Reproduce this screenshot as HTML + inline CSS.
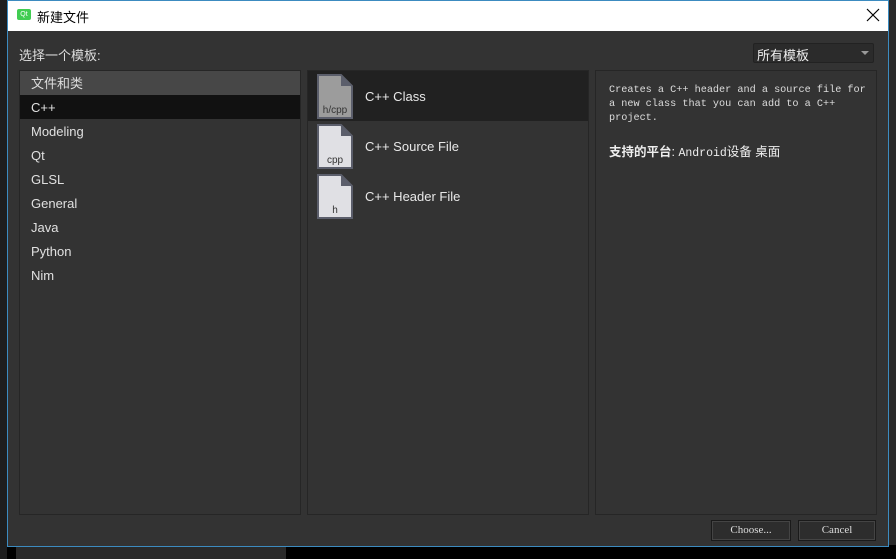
<!DOCTYPE html><html><head><style>
body{margin:0;width:896px;height:559px;background:#2a2a2a;position:relative;overflow:hidden;font-family:"Liberation Sans","Noto Sans CJK SC",sans-serif;}
.a{position:absolute}
.dlg{left:7px;top:0;width:880px;height:545px;border:1px solid #3c8bc0;background:#333;}
.title{left:8px;top:1px;width:880px;height:30px;background:#fff;}
.panel{background:#333;border:1px solid #262626;}
.row{position:absolute;left:0;width:280px;height:24px;line-height:26px;color:#e0e0e0;font-size:13px;padding-left:11px;box-sizing:border-box}
.mono{font-family:"Liberation Mono","Noto Sans CJK SC",monospace;}
.btn{border:1px solid #1a1a1a;background:#2d2d2d;color:#ddd;font-size:11px;text-align:center;line-height:18px;font-family:"Liberation Serif",serif;box-shadow:inset 0 0 0 1px #444}
.it{position:absolute;left:0;width:280px;height:50px;}
.it span{position:absolute;left:57px;top:18px;color:#e8e8e8;font-size:13px}
</style></head><body>
<div class="a" style="left:0;top:545px;width:896px;height:14px;background:#000"></div>
<div class="a" style="left:16px;top:546px;width:270px;height:13px;background:#2a2a2a"></div>
<div class="a" style="left:0;top:0;width:7px;height:559px;background:#1e1e1e"></div>
<div class="a dlg"></div>
<div class="a title"></div>
<div class="a" style="left:17px;top:9px;width:14px;height:11px;background:#41cd52;border-radius:2px;color:#fff;font-size:7px;line-height:11px;text-align:center">Qt</div>
<div class="a" style="left:37px;top:7px;font-size:13px;color:#000">新建文件</div>
<svg class="a" style="left:866px;top:8px" width="14" height="14"><path d="M1 1L13 13M13 1L1 13" stroke="#000" stroke-width="1.2"/></svg>
<div class="a" style="left:19px;top:45px;font-size:13px;color:#ddd">选择一个模板:</div>
<div class="a" style="left:753px;top:43px;width:121px;height:20px;background:#2b2b2b;border:1px solid #222;border-radius:2px;box-sizing:border-box"></div>
<div class="a" style="left:757px;top:45px;font-size:13px;color:#eee">所有模板</div>
<div class="a" style="left:861px;top:51px;width:0;height:0;border-left:4px solid transparent;border-right:4px solid transparent;border-top:4px solid #999"></div>
<div class="a panel" style="left:19px;top:70px;width:280px;height:443px">
<div class="row" style="top:0;background:#474747;color:#ddd">文件和类</div>
<div class="row" style="top:24px;background:#111">C++</div>
<div class="row" style="top:48px">Modeling</div>
<div class="row" style="top:72px">Qt</div>
<div class="row" style="top:96px">GLSL</div>
<div class="row" style="top:120px">General</div>
<div class="row" style="top:144px">Java</div>
<div class="row" style="top:168px">Python</div>
<div class="row" style="top:192px">Nim</div>
</div>
<div class="a panel" style="left:307px;top:70px;width:280px;height:443px">
<div class="it" style="top:0;background:#212121"><svg class="a" style="left:9px;top:3px" width="36" height="45"><path d="M1 1H24L35 12V44H1Z" fill="#9c9c9c" stroke="#5b5e6b" stroke-width="2"/><path d="M24 1V12H35Z" fill="#5b5e6b"/><text x="18" y="39" font-size="10" text-anchor="middle" fill="#333" font-family="Liberation Sans">h/cpp</text></svg><span>C++ Class</span></div>
<div class="it" style="top:50px"><svg class="a" style="left:9px;top:3px" width="36" height="45"><path d="M1 1H24L35 12V44H1Z" fill="#e0e0e4" stroke="#5b5e6b" stroke-width="2"/><path d="M24 1V12H35Z" fill="#5b5e6b"/><text x="18" y="39" font-size="10" text-anchor="middle" fill="#333" font-family="Liberation Sans">cpp</text></svg><span>C++ Source File</span></div>
<div class="it" style="top:100px"><svg class="a" style="left:9px;top:3px" width="36" height="45"><path d="M1 1H24L35 12V44H1Z" fill="#e0e0e4" stroke="#5b5e6b" stroke-width="2"/><path d="M24 1V12H35Z" fill="#5b5e6b"/><text x="18" y="39" font-size="10" text-anchor="middle" fill="#333" font-family="Liberation Sans">h</text></svg><span>C++ Header File</span></div>
</div>
<div class="a panel" style="left:595px;top:70px;width:280px;height:443px">
<div class="a mono" style="left:13px;top:13px;font-size:10.2px;line-height:14px;color:#ddd;white-space:pre">Creates a C++ header and a source file for
a new class that you can add to a C++
project.</div>
<div class="a" style="left:13px;top:70px;font-size:12.5px;color:#eee"><b>支持的平台</b>: <span class="mono" style="font-size:11.5px">Android</span>设备 桌面</div>
</div>
<div class="a btn" style="left:711px;top:520px;width:78px;height:19px">Choose...</div>
<div class="a btn" style="left:798px;top:520px;width:76px;height:19px">Cancel</div>
</body></html>
